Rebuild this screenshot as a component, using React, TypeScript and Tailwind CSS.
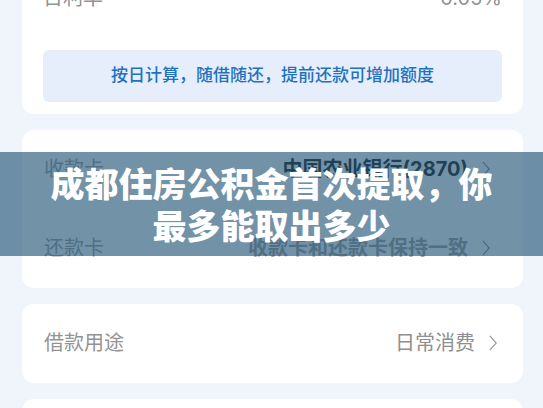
import React from 'react';
import clsx from 'clsx';

interface LoanRowProps {
  label: string;
  value: string;
  tone?: 'strong' | 'muted' | 'plain';
}

const toneClass = {
  strong: 'font-bold text-[#333333]',
  muted: 'font-bold text-[#a8a8a8]',
  plain: 'text-[#8f8f8f]',
};

function Chevron() {
  return (
    <svg className="h-4 w-2" viewBox="0 0 8 16" fill="none" stroke="#9b9b9b" strokeWidth="1.2" aria-hidden="true">
      <path d="M0.8 0.8 L7.2 8 L0.8 15.2" />
    </svg>
  );
}

function LoanRow({ label, value, tone = 'plain' }: LoanRowProps) {
  return (
    <div
      className={clsx(
        'flex h-[79px] items-center justify-between pb-0.5 pl-[22px]',
        tone === 'plain' ? 'pr-[26px]' : 'pr-[33px]',
      )}
    >
      <span className={clsx('text-xl', tone === 'plain' ? 'text-[#939393]' : 'text-[#a8a8a8]')}>{label}</span>
      <button type="button" className="flex items-center gap-3.5">
        <span className={clsx('text-xl', toneClass[tone])}>{value}</span>
        <Chevron />
      </button>
    </div>
  );
}

export default function App() {
  return (
    <div
      lang="zh-CN"
      className="relative h-screen overflow-hidden bg-[#f0f4fb] font-[Inter,'Noto_Sans_CJK_SC',sans-serif]"
    >
      <main className="-mt-9 flex flex-col gap-4 pr-5 pl-[22px]">
        {/* Daily rate */}
        <section className="rounded-xl bg-white px-[21px] pt-5 pb-3">
          <div className="flex h-[66px] items-start justify-between text-xl text-[#939393]">
            <span>日利率</span>
            <span>0.05%</span>
          </div>
          <p className="flex h-[52px] items-center justify-center rounded-md bg-[#e7eefb] text-[17px] font-medium text-[#1f72bd]">
            按日计算，随借随还，提前还款可增加额度
          </p>
        </section>

        {/* Bank cards */}
        <section className="rounded-xl bg-white">
          <LoanRow label="收款卡" value="中国农业银行(2870)" tone="strong" />
          <LoanRow label="还款卡" value="收款卡和还款卡保持一致" tone="muted" />
        </section>

        {/* Purpose */}
        <section className="rounded-xl bg-white">
          <LoanRow label="借款用途" value="日常消费" />
        </section>

        <section className="h-20 rounded-xl bg-white" />
      </main>

      {/* Headline band over the cards */}
      <div className="absolute inset-x-0 top-[152px] flex h-[104px] items-center justify-center bg-[#14496e]/60">
        <h1 className="text-center font-['Noto_Sans_CJK_SC',sans-serif] text-[34px] leading-[42px] font-black text-white">
          成都住房公积金首次提取，你
          <br />
          最多能取出多少
        </h1>
      </div>
    </div>
  );
}
